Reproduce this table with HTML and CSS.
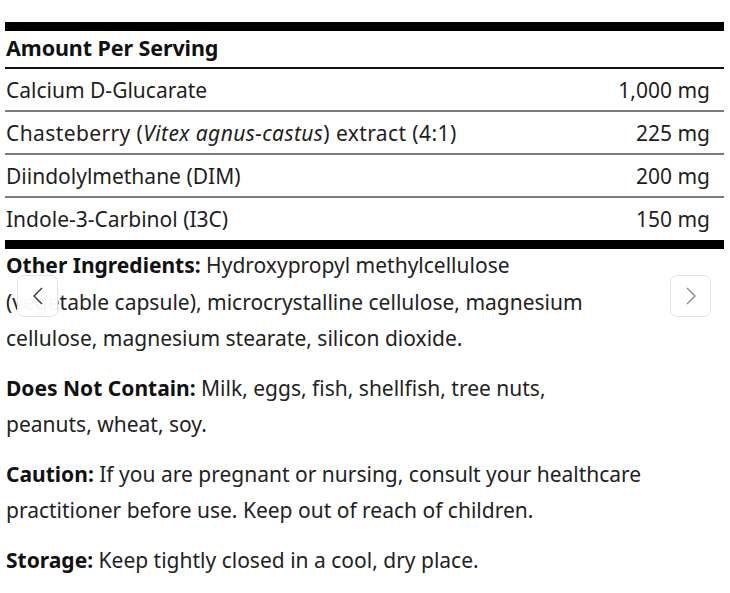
FILE: index.html
```html
<!DOCTYPE html>
<html>
<head>
<meta charset="utf-8">
<link rel="stylesheet" href="styles.css">
</head>
<body>
<div class="slide">
  <div class="facts">
    <div class="bar-thick"></div>
    <div class="head">Amount Per Serving</div>
    <div class="row first"><span>Calcium D-Glucarate</span><span class="val">1,000 mg</span></div>
    <div class="row"><span class="wide">Chasteberry (<i>Vitex agnus-castus</i>) extract (4:1)</span><span class="val">225 mg</span></div>
    <div class="row"><span>Diindolylmethane (DIM)</span><span class="val">200 mg</span></div>
    <div class="row last"><span>Indole-3-Carbinol (I3C)</span><span class="val">150 mg</span></div>
    <div class="bar-bottom"></div>
  </div>
  <div class="notes">
    <p><b>Other Ingredients:</b> Hydroxypropyl methylcellulose<br>(vegetable capsule), microcrystalline cellulose, magnesium<br>cellulose, magnesium stearate, silicon dioxide.</p>
    <p><b>Does Not Contain:</b> Milk, eggs, fish, shellfish, tree nuts,<br>peanuts, wheat, soy.</p>
    <p><b>Caution:</b> If you are pregnant or nursing, consult your healthcare<br>practitioner before use. Keep out of reach of children.</p>
    <p><b>Storage:</b> Keep tightly closed in a cool, dry place.</p>
  </div>
  <button class="nav prev" aria-label="Previous"><svg width="14" height="20" viewBox="0 0 14 20"><path d="M11 2 L3 10 L11 18" fill="none" stroke="#333" stroke-width="1.4"/></svg></button>
  <button class="nav next" aria-label="Next"><svg width="14" height="20" viewBox="0 0 14 20"><path d="M3 2 L11 10 L3 18" fill="none" stroke="#888" stroke-width="1.4"/></svg></button>
</div>
</body>
</html>
```
FILE: styles.css
```css
html, body {
  margin: 0;
  padding: 0;
  background: #fff;
}
body {
  font-family: "Noto Sans", "Open Sans", sans-serif;
  color: #1e1e1e;
}
.slide {
  position: relative;
  width: 730px;
  height: 593px;
  padding-top: 22px;
  box-sizing: border-box;
}
.facts {
  margin-left: 5px;
  width: 719px;
}
.bar-thick {
  height: 9px;
  background: #000;
}
.head {
  height: 36px;
  font-weight: bold;
  font-size: 21.5px;
  line-height: 34px;
  padding-left: 1px;
  border-bottom: 2px solid #111;
  color: #111;
  letter-spacing: -0.1px;
}
.row {
  display: flex;
  justify-content: space-between;
  align-items: center;
  height: 41px;
  font-size: 21px;
  padding: 0 14px 0 1px;
  border-bottom: 2px solid #7a7a7a;
}
.row .wide {
  letter-spacing: 0.4px;
}
.row.last {
  border-bottom: none;
  height: 42px;
}
.bar-bottom {
  height: 9px;
  background: #000;
}
.notes {
  padding-left: 6px;
  margin-top: -2px;
  font-size: 21px;
  line-height: 36.5px;
  color: #222;
}
.notes p {
  margin: 0 0 13px;
}
.notes b {
  color: #111;
}
.nav {
  position: absolute;
  top: 275px;
  width: 41px;
  height: 42px;
  border: 1px solid #e2e2e2;
  border-radius: 7px;
  background: rgba(255,255,255,0.96);
  display: flex;
  align-items: center;
  justify-content: center;
  padding: 0;
}
.prev { left: 17px; }
.next { left: 670px; background: #fff; }
```
